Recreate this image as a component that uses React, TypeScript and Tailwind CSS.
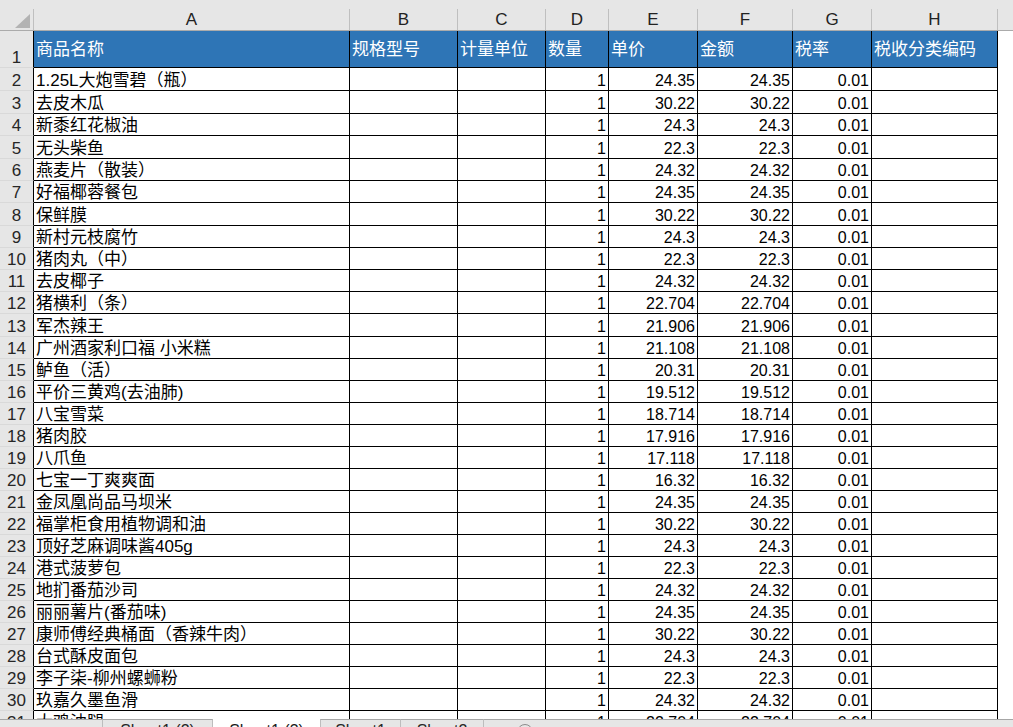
import React from 'react';

const columns = [
  { letter: 'A', title: '商品名称', width: 'w-[316px]' },
  { letter: 'B', title: '规格型号', width: 'w-[108px]' },
  { letter: 'C', title: '计量单位', width: 'w-[88px]' },
  { letter: 'D', title: '数量', width: 'w-[63px]' },
  { letter: 'E', title: '单价', width: 'w-[89px]' },
  { letter: 'F', title: '金额', width: 'w-[95px]' },
  { letter: 'G', title: '税率', width: 'w-[79px]' },
  { letter: 'H', title: '税收分类编码', width: 'w-[126px]' },
];

const names = [
  '1.25L大炮雪碧（瓶）',
  '去皮木瓜',
  '新黍红花椒油',
  '无头柴鱼',
  '燕麦片（散装）',
  '好福椰蓉餐包',
  '保鲜膜',
  '新村元枝腐竹',
  '猪肉丸（中）',
  '去皮椰子',
  '猪横利（条）',
  '军杰辣王',
  '广州酒家利口福 小米糕',
  '鲈鱼（活）',
  '平价三黄鸡(去油肺)',
  '八宝雪菜',
  '猪肉胶',
  '八爪鱼',
  '七宝一丁爽爽面',
  '金凤凰尚品马坝米',
  '福掌柜食用植物调和油',
  '顶好芝麻调味酱405g',
  '港式菠萝包',
  '地扪番茄沙司',
  '丽丽薯片(番茄味)',
  '康师傅经典桶面（香辣牛肉）',
  '台式酥皮面包',
  '李子柒-柳州螺蛳粉',
  '玖嘉久墨鱼滑',
  '大鸡油腿',
];

const cycle = ['24.35', '30.22', '24.3', '22.3', '24.32'];
const falling = ['22.704', '21.906', '21.108', '20.31', '19.512', '18.714', '17.916', '17.118', '16.32'];
const prices = [...cycle, ...cycle, ...falling, ...cycle, ...cycle, '22.704'];

// rows that come out one pixel taller at this zoom level
const tallRows = [2, 3, 5, 8, 13];

const rows = names.map((name, i) => ({
  num: i + 2,
  name,
  price: prices[i],
}));

const RowHeader = ({ n }: { n: number }) => (
  <div className="w-[34px] shrink-0 flex items-end justify-center bg-[#e6e6e6] border-r border-r-black border-b border-b-[#d9d9d9] text-[17px] leading-[18px] text-[#262626]">
    {n}
  </div>
);

const TextCell = ({ width, children }: { width: string; children?: React.ReactNode }) => (
  <div className={`${width} shrink-0 flex items-end pl-[2px] border-r border-b border-black text-[17px] leading-[18px] whitespace-nowrap overflow-hidden`}>
    {children}
  </div>
);

const NumCell = ({ width, children }: { width: string; children?: React.ReactNode }) => (
  <div className={`${width} shrink-0 flex items-end justify-end pr-[2px] border-r border-b border-black text-[16px] leading-[18px] whitespace-nowrap`}>
    {children}
  </div>
);

const SheetTab = ({ label, active, className }: { label: string; active?: boolean; className: string }) => (
  <div
    className={`${className} shrink-0 flex justify-center text-[16px] leading-[18px] ${
      active ? 'bg-white text-[#1a1a1a]' : 'bg-[#e6e6e6] text-[#262626] border-t border-t-[#a6a6a6]'
    }`}
  >
    <span className={active ? 'pt-[3px]' : 'pt-[2px]'}>{label}</span>
  </div>
);

export default function App() {
  return (
    <div className="h-screen w-full overflow-hidden bg-white text-black font-['Liberation_Sans','Noto_Sans_CJK_SC',sans-serif]">
      <div className="flex flex-col">
        {/* strip above the column letters */}
        <div className="h-[9px] bg-[#e6e6e6]" />

        {/* column letters */}
        <div className="h-[22px] flex bg-[#e6e6e6] border-b border-[#ababab]">
          <div className="w-[34px] shrink-0 flex items-end justify-end pr-[3px] pb-[2px] border-r border-[#bfbfbf]">
            <svg width="15" height="14" viewBox="0 0 15 14">
              <polygon points="15,0 15,14 0,14" fill="#b3b3b3" />
            </svg>
          </div>
          {columns.map((c) => (
            <div
              key={c.letter}
              className={`${c.width} shrink-0 flex items-center justify-center border-r border-[#bfbfbf] text-[17px] leading-[18px] text-[#222]`}
            >
              {c.letter}
            </div>
          ))}
          <div className="flex-1" />
        </div>

        {/* sheet grid */}
        <div className="h-[688px] overflow-hidden flex flex-col">
          <div className="h-[37px] shrink-0 flex">
            <RowHeader n={1} />
            {columns.map((c) => (
              <div
                key={c.letter}
                className={`${c.width} shrink-0 flex items-center pl-[2px] pt-[2px] bg-[#2e75b6] border-r border-b border-black text-[17px] leading-[18px] text-white whitespace-nowrap`}
              >
                {c.title}
              </div>
            ))}
            <div className="flex-1" />
          </div>

          {rows.map((r) => (
            <div key={r.num} className={`${tallRows.includes(r.num) ? 'h-[23px]' : 'h-[22px]'} shrink-0 flex`}>
              <RowHeader n={r.num} />
              <TextCell width={columns[0].width}>{r.name}</TextCell>
              <TextCell width={columns[1].width} />
              <TextCell width={columns[2].width} />
              <NumCell width={columns[3].width}>1</NumCell>
              <NumCell width={columns[4].width}>{r.price}</NumCell>
              <NumCell width={columns[5].width}>{r.price}</NumCell>
              <NumCell width={columns[6].width}>0.01</NumCell>
              <TextCell width={columns[7].width} />
              <div className="flex-1" />
            </div>
          ))}
        </div>

        {/* sheet tabs */}
        <div className="h-[27px] flex bg-[#e6e6e6]">
          <div className="w-[102px] shrink-0 border-t border-t-[#a6a6a6]" />
          <SheetTab label="Sheet1 (2)" className="w-[111px] border-x border-x-[#bdbdbd]" />
          <SheetTab label="Sheet1 (3)" active className="w-[107px]" />
          <SheetTab label="Sheet1" className="w-[80px] border-l border-l-[#bdbdbd]" />
          <SheetTab label="Sheet2" className="w-[84px] border-x border-x-[#bdbdbd]" />
          <div className="flex-1 border-t border-t-[#a6a6a6] pl-[33px] pt-[4px]">
            <svg width="16" height="16" viewBox="0 0 16 16">
              <circle cx="8" cy="8" r="7.5" fill="none" stroke="#8c8c8c" strokeWidth="1" />
              <path d="M8 4v8M4 8h8" stroke="#6e6e6e" strokeWidth="1" />
            </svg>
          </div>
        </div>
      </div>
    </div>
  );
}
